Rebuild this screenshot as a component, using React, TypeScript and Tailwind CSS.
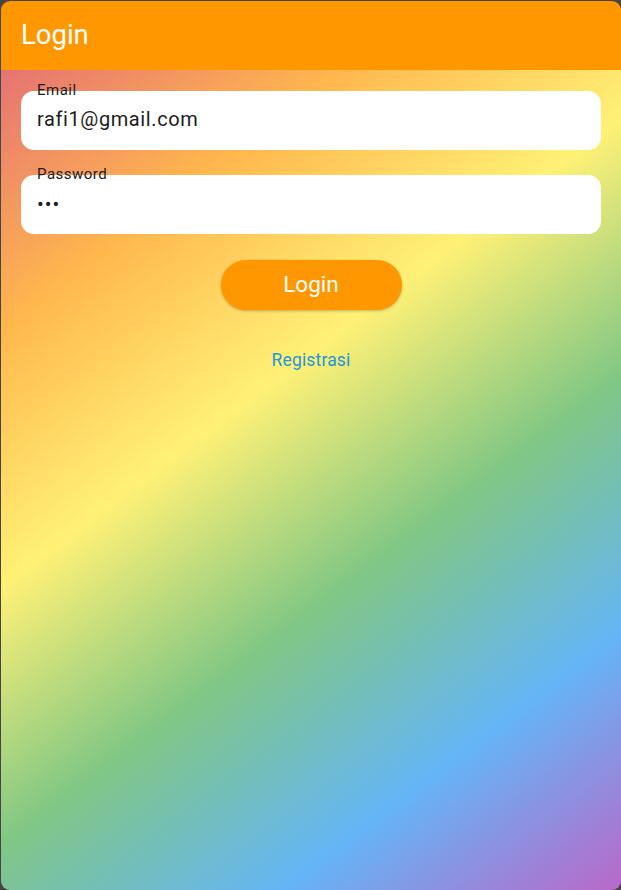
import { useState } from "react";

type FieldProps = {
	label: string;
	value: string;
	secret?: boolean;
};

const Field = ({ label, value, secret }: FieldProps) => {
	return (
		<div className="relative h-[59px] rounded-[13px] bg-white px-4">
			<span className="absolute left-4 top-[-8px] text-[15px] leading-[15px] tracking-[0.5px] text-[#1d1b20]">{label}</span>
			{secret ? (
				<p className="pt-[19px] text-[20px] leading-[20px] tracking-[1px] text-[#1d1b20]">{"\u2022".repeat(value.length)}</p>
			) : (
				<p className="pt-[18px] text-[20px] leading-[20px] tracking-[0.6px] text-[#1d1b20]">{value}</p>
			)}
		</div>
	);
};

const App = () => {
	const [email] = useState("rafi1@gmail.com");
	const [password] = useState("abc");

	return (
		<div className="w-[621px] h-[890px] bg-[#454545] pl-px pt-px font-['Roboto',sans-serif]">
			<div className="flex h-full flex-col overflow-hidden rounded-[9px]">
				<header className="flex h-[69px] shrink-0 items-center bg-[#FF9800] px-5 pb-[2px]">
					<h1 className="text-[27.5px] leading-none text-white">Login</h1>
				</header>
				<main className="flex flex-1 flex-col bg-[linear-gradient(142.9deg,#E57373,#FFB74D,#FFF176,#81C784,#64B5F6,#BA68C8)] px-5 pt-[21px]">
					<Field label="Email" value={email} />
					<div className="h-[25px]" />
					<Field label="Password" value={password} secret />
					<div className="flex justify-center pt-[26px]">
						<button className="h-[50px] w-[181px] rounded-full bg-[#FF9800] text-[22.5px] font-normal text-white shadow-[0_1px_3px_rgba(0,0,0,0.25)]">
							Login
						</button>
					</div>
					<div className="flex justify-center pt-[25px]">
						<button className="h-[50px] px-5 text-[17.5px] font-normal tracking-[0.15px] text-[#2596d9]">Registrasi</button>
					</div>
				</main>
			</div>
		</div>
	);
};

export default App;
